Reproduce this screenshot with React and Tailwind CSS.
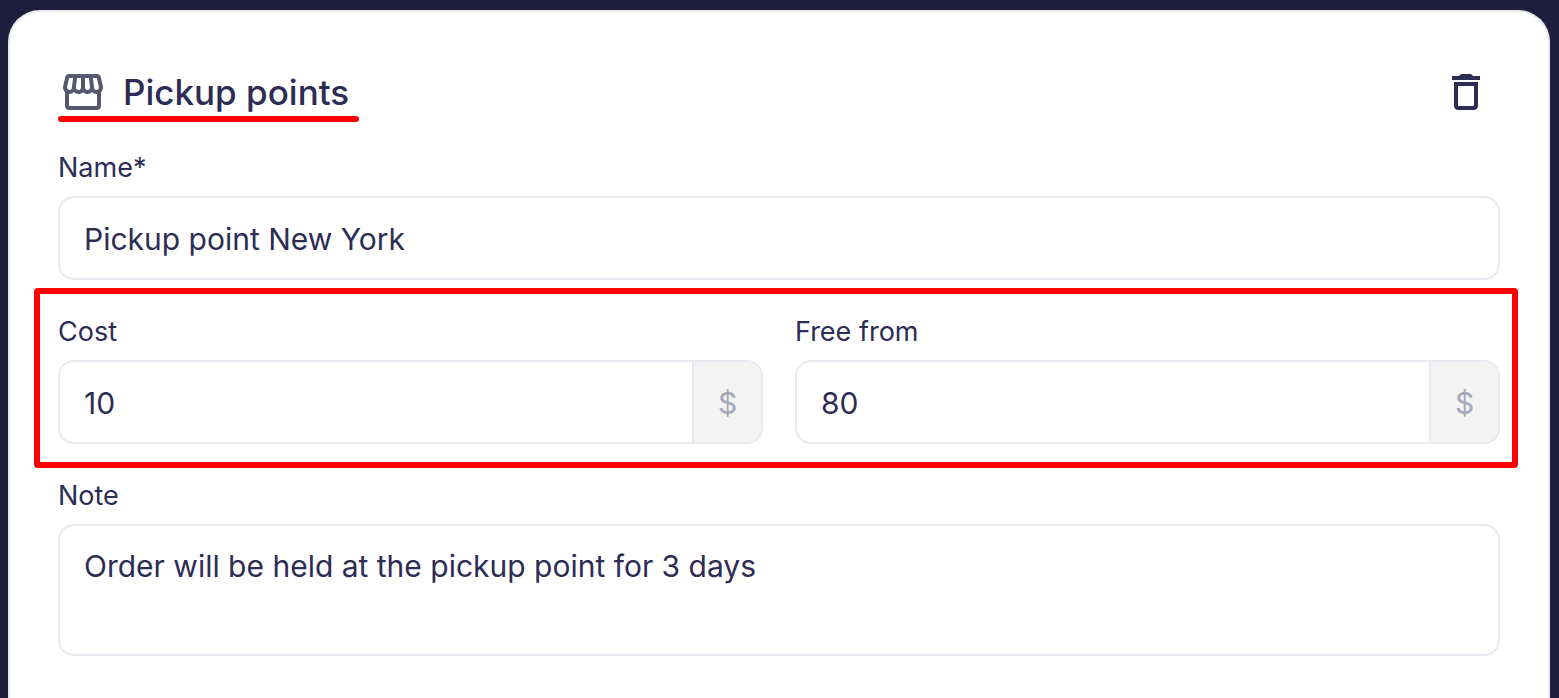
import { MdOutlineStorefront } from "react-icons/md";

const boxClass =
  "w-full rounded-2xl border-2 border-[#e8e8ee] bg-white px-6 text-[30px] leading-10 text-[#2d2c54] outline-none";

function Field({ id, label, children }) {
  return (
    <div className="flex min-w-0 flex-col gap-2">
      <label htmlFor={id} className="text-[27px] leading-10">
        {label}
      </label>
      {children}
    </div>
  );
}

function MoneyField({ id, label, value }) {
  return (
    <Field id={id} label={label}>
      <div className="flex h-[84px] overflow-hidden rounded-2xl border-2 border-[#e8e8ee]">
        <input
          id={id}
          type="text"
          inputMode="numeric"
          defaultValue={value}
          className="min-w-0 flex-1 bg-white px-6 pt-0.5 text-[30px] leading-10 outline-none"
        />
        <span className="flex w-[69px] items-center justify-center border-l-2 border-[#e8e8ee] bg-[#f3f3f4] pt-0.5 text-[30px] leading-10 text-[#a2a8b8]">
          $
        </span>
      </div>
    </Field>
  );
}

function TrashIcon() {
  return (
    <svg viewBox="0 0 24 24" className="size-12" fill="currentColor" aria-hidden="true">
      <path d="M6 19c0 1.1.9 2 2 2h8c1.1 0 2-.9 2-2V7H6v12zM8 9h8v10H8V9zm7.5-5l-.71-.71c-.18-.18-.44-.29-.7-.29H9.91c-.26 0-.52.11-.7.29L8.5 4H5v2h14V4h-3.5z" />
    </svg>
  );
}

export default function App() {
  return (
    <div className="flex min-h-screen flex-col bg-[#1f1f3d] pt-2.5 pr-[9px] pl-2 font-['Inter',sans-serif] text-[#2d2c54]">
      <form className="flex flex-1 flex-col gap-8 rounded-t-[32px] border-2 border-b-0 border-[#e8e8ee] bg-white px-12 pt-14 pb-10">
        <header className="flex items-center justify-between pr-2.5">
          <div className="relative flex items-center gap-4 pr-2.5 pl-px">
            <MdOutlineStorefront className="size-12 text-[#57576f]" aria-hidden="true" />
            <h1 className="text-[35px] leading-12 font-medium">Pickup points</h1>
            <span className="absolute inset-x-0 -bottom-1.5 h-1.5 rounded-full bg-[#ff0000]" />
          </div>
          <button type="button" aria-label="Delete pickup point">
            <TrashIcon />
          </button>
        </header>

        <Field id="name" label="Name*">
          <input
            id="name"
            type="text"
            required
            defaultValue="Pickup point New York"
            className={`${boxClass} h-[84px] pt-0.5`}
          />
        </Field>

        <div className="relative grid grid-cols-2 gap-8">
          <MoneyField id="cost" label="Cost" value="10" />
          <MoneyField id="free-from" label="Free from" value="80" />
          <span className="pointer-events-none absolute -inset-y-6 -right-[18px] -left-6 rounded-sm border-6 border-[#ff0000]" />
        </div>

        <Field id="note" label="Note">
          <textarea
            id="note"
            defaultValue="Order will be held at the pickup point for 3 days"
            className={`${boxClass} h-[132px] resize-none py-5`}
          />
        </Field>
      </form>
    </div>
  );
}
